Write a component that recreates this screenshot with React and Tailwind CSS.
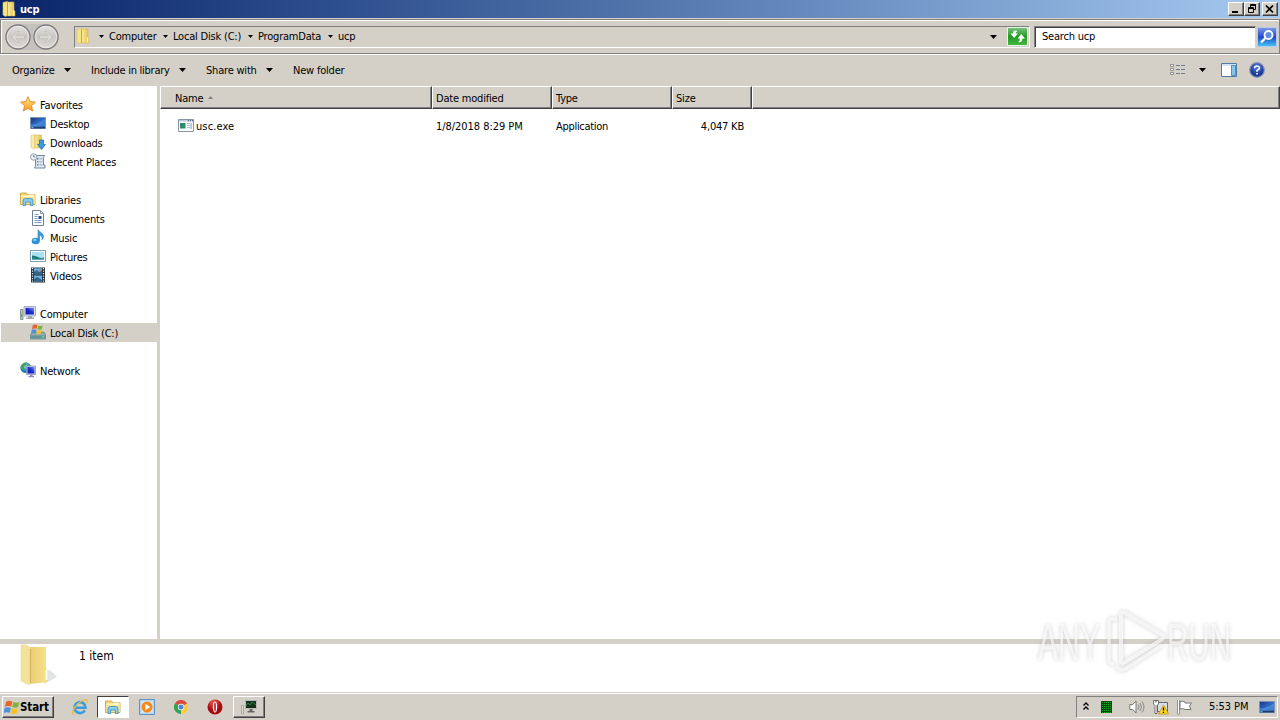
import React from 'react';

const Svg = ({ w = 16, h = 16, vb, className = '', children }) => (
  <svg width={w} height={h} viewBox={vb || `0 0 ${w} ${h}`} className={`block shrink-0 ${className}`}>
    {children}
  </svg>
);

const Gradients = () => (
  <svg width="0" height="0" className="absolute">
    <defs>
      <linearGradient id="fold" x1="0" x2="1">
        <stop offset="0" stopColor="#f9eba0" />
        <stop offset="1" stopColor="#e3bf4e" />
      </linearGradient>
      <linearGradient id="bigfold" x1="0" x2="1">
        <stop offset="0" stopColor="#e9cd74" />
        <stop offset="1" stopColor="#f6e28c" />
      </linearGradient>
      <linearGradient id="blue" x1="0" x2="1" y1="0" y2="1">
        <stop offset="0" stopColor="#16327c" />
        <stop offset="0.5" stopColor="#2f6cc8" />
        <stop offset="1" stopColor="#1b4796" />
      </linearGradient>
      <linearGradient id="screen" x1="0" x2="1" y1="1" y2="0">
        <stop offset="0" stopColor="#0b1aa0" />
        <stop offset="0.5" stopColor="#1a2ccc" />
        <stop offset="1" stopColor="#7d92ee" />
      </linearGradient>
      <linearGradient id="star" x1="0" x2="0" y1="0" y2="1">
        <stop offset="0" stopColor="#ffe98a" />
        <stop offset="1" stopColor="#fb9a1c" />
      </linearGradient>
      <linearGradient id="nav" x1="0" x2="0" y1="0" y2="1">
        <stop offset="0" stopColor="#e4e2df" />
        <stop offset="0.5" stopColor="#c9c7c3" />
        <stop offset="1" stopColor="#dedbd7" />
      </linearGradient>
      <linearGradient id="go" x1="0" x2="0" y1="0" y2="1">
        <stop offset="0" stopColor="#7cc47a" />
        <stop offset="0.5" stopColor="#219a24" />
        <stop offset="1" stopColor="#45b83f" />
      </linearGradient>
      <linearGradient id="find" x1="0" x2="0" y1="0" y2="1">
        <stop offset="0" stopColor="#7f9be8" />
        <stop offset="0.5" stopColor="#2049cc" />
        <stop offset="1" stopColor="#45c8f4" />
      </linearGradient>
      <radialGradient id="globe" cx="0.4" cy="0.3">
        <stop offset="0" stopColor="#9de0f2" />
        <stop offset="1" stopColor="#1580b4" />
      </radialGradient>
      <radialGradient id="help" cx="0.5" cy="0.3">
        <stop offset="0" stopColor="#5b80de" />
        <stop offset="1" stopColor="#1a3a9c" />
      </radialGradient>
      <radialGradient id="opera" cx="0.4" cy="0.2">
        <stop offset="0" stopColor="#f05a55" />
        <stop offset="1" stopColor="#a80a10" />
      </radialGradient>
    </defs>
  </svg>
);

const Folder = ({ className }) => (
  <Svg className={className}>
    <path d="M2 1.500 6.500.5v14l-2 1L2 14z" fill="#f8e580" stroke="#dcc05a" strokeWidth=".6" />
    <path d="M6.500 1h6.500v8l1 1.500v4.500H6.500z" fill="url(#fold)" stroke="#d2ae48" strokeWidth=".5" />
    <path d="M6.500 1.500v13.500" stroke="#c29a35" strokeWidth=".7" />
    <path d="M12.700 9.500v5" stroke="#fffbe0" strokeWidth="1.200" />
  </Svg>
);
const Star = () => (
  <Svg>
    <path d="m8 .7 2.200 4.900 5.200.5-3.900 3.600 1.100 5.300L8 12.300 3.400 15l1.100-5.300L.6 6.100l5.200-.5z" fill="url(#star)" stroke="#e38522" strokeWidth=".9" />
  </Svg>
);
const Desktop = () => (
  <Svg>
    <path d="M.5 2.500h15v11H.5z" fill="url(#blue)" stroke="#7c93b8" />
    <path d="M1 9.500Q7 10 15 4v7.500H1z" fill="#62a5ec" opacity=".5" />
    <path d="M1 12h14v1.500H1z" fill="#253c6c" />
    <path d="M1.500 12.200h2v1h-2z" fill="#7fd0ef" />
  </Svg>
);
const Downloads = () => (
  <Svg>
    <path d="M1 1.500 5 .5v13.500l-1.500 1L1 13.500z" fill="#faecab" stroke="#dac05c" strokeWidth=".6" />
    <path d="M5 1h6.500v13H5z" fill="url(#fold)" stroke="#d2b04c" strokeWidth=".5" />
    <path d="M9.500 6h4v4.500h2L11.500 15.500l-4-5h2z" fill="#3a9ae2" stroke="#1d67ae" strokeWidth=".7" />
  </Svg>
);
const Recent = () => (
  <Svg>
    <path d="M5 2.500h9.500q-1 1-1 3V12h1.500v3H4.500q1-1 1-3V5z" fill="#e0e9f2" stroke="#74879b" strokeWidth="1" />
    <path d="M7 5h1.500v1.500H7zM7 8h1.500v1.500H7zM7 11h1.500v1.500H7z" fill="#5d83ab" />
    <path d="M9.500 5.800h3M9.500 8.800h3M9.500 11.800h3" stroke="#8ea7bf" />
    <circle cx="3.700" cy="4" r="3.200" fill="#eef4f9" stroke="#7d8b98" strokeWidth=".8" />
    <path d="M3.700 2v2h1.500" stroke="#555" strokeWidth=".7" fill="none" />
  </Svg>
);
const Libraries = ({ w = 16 }) => (
  <Svg w={w} h={w} vb="0 0 16 16">
    <path d="M.5 2h6l1 1.500h7.500v10H.5z" fill="#f4d774" stroke="#c99d32" strokeWidth=".8" />
    <path d="M1.500 4.500h6l1-1h6V6h-13z" fill="#fff7c8" />
    <path d="M1 6h14v7H1z" fill="#f6e190" />
    <path d="M3 14.500V10q0-2.500 2.500-2.500h5Q13 7.500 13 10v4.500h-2.700V11H5.700v3.500z" fill="#87cdee" stroke="#3c8dbb" strokeWidth=".8" />
  </Svg>
);
const Documents = () => (
  <Svg>
    <path d="M2.500.5h8l3 3v12h-11z" fill="#fdfdff" stroke="#6e8097" />
    <path d="M10.500.5v3h3" fill="#d6dfeb" stroke="#6e8097" strokeWidth=".8" />
    <path d="M4.500 4.500h4M4.500 6.500h3M4.500 8.500h3M4.500 10.500h7M4.500 12.500h7" stroke="#7f9cc2" />
    <path d="M8.500 6h3v3h-3z" fill="#284d84" />
  </Svg>
);
const Music = () => (
  <Svg>
    <path d="M8 .5c.5 2.500 5.500 3 5.500 7 0 1.500-.8 2.500-1.500 3.200.6-2.500-.5-4-2.500-4.700V12H8z" fill="#3a9ddd" stroke="#2277b7" strokeWidth=".5" />
    <ellipse cx="5.700" cy="12" rx="4" ry="3.300" fill="#2c8fd6" />
    <ellipse cx="4.800" cy="10.900" rx="1.800" ry="1.100" fill="#8ed2f6" />
  </Svg>
);
const Pictures = () => (
  <Svg>
    <path d="M.5 2.500h15v11H.5z" fill="#fff" stroke="#7c9bab" />
    <path d="M2 4h12v8H2z" fill="#a8e1f0" />
    <path d="M2 7.500q3.500 0 6 1.500t6 .5V12H2z" fill="#1d7b78" />
    <path d="M2 10.500q6 1 12-.5V12H2z" fill="#5aa7b8" />
  </Svg>
);
const Videos = () => (
  <Svg>
    <path d="M1 .5h14v15H1z" fill="#25303a" />
    <path d="M4 1.200h8v6H4zM4 8.500h8v6H4z" fill="#68afdd" />
    <path d="m4 5 3-2 2 2 3-2v4.200H4zM4 12l3-2 5 3v1.500H4z" fill="#31658c" />
    <path d="M9 2.500h2v2H9z" fill="#d1845c" />
    <path d="M2.500 1v15M13.500 1v15" stroke="#e4edf2" strokeWidth="1.200" strokeDasharray="1.300 1.200" />
  </Svg>
);
const Computer = () => (
  <Svg>
    <path d="M.5 4.500h2.500v10H.5z" fill="#b9c6bd" stroke="#78877c" strokeWidth=".8" />
    <path d="M1 9h1.400v3H1z" fill="#62b24a" />
    <path d="M4 1.500h11.500v9.500H4z" fill="#dedff0" stroke="#9a9cc0" strokeWidth=".8" />
    <path d="M5.500 2.800h8.500V9.500H5.500z" fill="url(#screen)" />
    <path d="M8 11h4v1.500h2v1.500H6v-1.500h2z" fill="#a3a7b5" />
  </Svg>
);
const Flag = () => (
  <g>
    <path d="M2 1.500Q4.500 0 7 1.500L6 5.500Q3.500 4.500 1 5.700z" fill="#ec642a" />
    <path d="M7.800 1.800Q10 3 12.500 1.800l-1 4Q9 7 6.800 5.800z" fill="#7db53e" />
    <path d="M.8 6.500Q3.200 5.300 5.800 6.500L4.800 10.300Q2.500 9.300 0 10.500z" fill="#4c91dc" />
    <path d="M6.600 6.700Q9 8 11.300 6.700l-1 4Q8 12 5.600 10.700z" fill="#f6c11f" />
  </g>
);
const Disk = () => (
  <Svg>
    <path d="M1 10 3 8h11l1.500 2.500v4.500H.5v-4z" fill="#93aaae" stroke="#5c7478" strokeWidth=".6" />
    <path d="M1 11.500h14v3H1z" fill="#5d959b" />
    <path d="M12 12.500h2v1h-2z" fill="#a7f07c" />
    <g transform="translate(1 -.3) scale(.94)"><Flag /></g>
  </Svg>
);
const Network = () => (
  <Svg>
    <circle cx="5.700" cy="5.700" r="5.400" fill="url(#globe)" />
    <path d="M2 3q2-3 5-2.500L6 3 3.500 5 4 7 2.500 8Q.5 5 2 3zM7 4l3-1 1 2H8z" fill="#46a047" />
    <path d="M6.500 4h9v8.500h-9z" fill="#cfd5ea" stroke="#8088b2" strokeWidth=".7" />
    <path d="M7.500 5h7v6.500h-7z" fill="url(#screen)" />
    <path d="M10 12.500h2.500V14H14v1.200H8.500V14H10z" fill="#8a90b5" />
  </Svg>
);
const Exe = () => (
  <Svg>
    <path d="M.5 1.500h15v12H.5z" fill="#fff" stroke="#8694a8" />
    <path d="M1 2h14v1.500H1z" fill="#bccbdd" />
    <path d="M10 2.200h1v1h-1zM12 2.200h1v1h-1zM14 2.200h1v1h-1z" fill="#42587a" />
    <path d="M2 5h5.500v5.500H2z" fill="#2f8a68" />
    <path d="M9 5.500h3M9 7.500h3M9 9.500h3" stroke="#b9c2cc" />
    <path d="M13 5v6" stroke="#6aa4c5" />
  </Svg>
);
const NavCircle = ({ flip }) => (
  <Svg w={26} h={26}>
    <circle cx="13" cy="13" r="12" fill="url(#nav)" stroke="#7b7b7d" strokeWidth="1.300" />
    <circle cx="13" cy="13" r="10.700" fill="none" stroke="#efeeec" strokeWidth=".8" />
    <g transform={flip ? 'translate(26 0) scale(-1 1)' : ''}>
      <path d="m6.500 13 5.500-5.500h2.500L11 11.300h8.500v3.400H11l3.500 3.800H12z" fill="#dad8d4" stroke="#c0bdb8" strokeWidth=".8" />
    </g>
  </Svg>
);
const Caret = ({ small, className = '' }) =>
  small ? (
    <Svg w={5} h={3} className={className}><path d="M0 0h5L2.500 3z" fill="#000" /></Svg>
  ) : (
    <Svg w={7} h={4} className={className}><path d="M0 0h7L3.500 4z" fill="#000" /></Svg>
  );

const IE = () => (
  <Svg w={18} h={18}>
    <path d="M13.800 12.300A5.500 5.500 0 1 1 14.500 9.700H5" fill="none" stroke="#3a9ce0" strokeWidth="2.600" />
    <path d="M3 16.300C-1.500 16 5.500 4.500 13 2c3.500-1 3.500 1 2.500 3.200" fill="none" stroke="#e9bd38" strokeWidth="1.300" />
  </Svg>
);
const Player = () => (
  <Svg>
    <path d="M.5.500h15v15H.5z" fill="#b8d6f0" stroke="#5e93c5" />
    <path d="M2.500 2.500h11v11h-11z" fill="#dceaf5" />
    <circle cx="8" cy="8" r="5.500" fill="#f58a1c" />
    <path d="m6.300 4.800 5 3.200-5 3.200z" fill="#fff" />
  </Svg>
);
const Chrome = () => (
  <Svg w={14} h={14}>
    <path d="M7 7 .9 3.500A7 7 0 0 1 13.100 3.500z" fill="#dd4b3e" />
    <path d="M7 7v7A7 7 0 0 1 .9 3.500z" fill="#35a155" />
    <path d="M7 7l6.100-3.500A7 7 0 0 1 7 14z" fill="#fbcb38" />
    <circle cx="7" cy="7" r="3.200" fill="#fff" />
    <circle cx="7" cy="7" r="2.500" fill="#4a86e0" />
  </Svg>
);
const Opera = () => (
  <Svg>
    <circle cx="8" cy="8" r="7.500" fill="url(#opera)" />
    <ellipse cx="8" cy="8" rx="2.200" ry="5.500" fill="#fff" />
    <ellipse cx="8" cy="8" rx=".9" ry="4.700" fill="#b52a2c" />
  </Svg>
);
const Console = () => (
  <Svg>
    <path d="M.5 6.500h2v8h-2z" fill="#e2e2dc" stroke="#999" strokeWidth=".8" />
    <path d="M4.500 1.500h11v8h-11z" fill="#12301a" stroke="#b9b9b9" />
    <path d="m5 7 2-3 2 2 2-3 4 3" stroke="#3f9854" fill="none" strokeWidth=".8" />
    <path d="M8.500 10h3v2h2v1.500h-7V12h2z" fill="#666" />
  </Svg>
);
const WindowsLogo = () => (
  <Svg w={17} h={16} vb="-.5 -.5 13.500 12.500"><Flag /></Svg>
);

const raised = 'border border-t-white border-l-white border-r-[#404040] border-b-[#404040] shadow-[inset_-1px_-1px_0_#808080]';

const Crumb = ({ children, className }) => (
  <div className={`flex items-center ${className}`}>
    <Caret small />
    <span className="ml-[5px]">{children}</span>
  </div>
);

const NavItem = ({ icon, children, root, selected }) => (
  <div className={`flex h-[19px] items-center gap-1 ${root ? 'pl-[19px]' : 'pl-[29px]'} ${selected ? 'bg-[#d4d0c8]' : ''}`}>
    <span className="-mt-px">{icon}</span>
    <span className="mt-[3px]">{children}</span>
  </div>
);

const HeadCell = ({ children, className }) => (
  <div className={`flex h-[23px] items-center border-t border-l border-t-white border-l-white border-r border-r-[#404040] border-b border-b-[#404040] bg-[#d4d0c8] pt-[2px] shadow-[inset_-1px_-1px_0_#808080] ${className}`}>
    {children}
  </div>
);

export default function App() {
  return (
    <div className="flex h-[720px] w-[1280px] flex-col overflow-hidden bg-[#d4d0c8] font-['DejaVu_Sans_Condensed','DejaVu_Sans',sans-serif] text-[11px] leading-[14px] tracking-[-0.2px] whitespace-nowrap text-black [font-stretch:condensed]">
      <Gradients />
      <header className="flex h-[18px] shrink-0 items-center bg-linear-to-r from-[#0a246a] to-[#a6caf0] pr-[2px] pl-[1px]">
        <Folder />
        <span className="ml-[3px] pt-px font-bold text-white">ucp</span>
        <div className="ml-auto flex">
          <div className={`flex h-[14px] w-4 items-end bg-[#d4d0c8] pb-[2px] pl-[3px] ${raised}`}>
            <div className="h-[2px] w-[6px] bg-black" />
          </div>
          <div className={`h-[14px] w-4 bg-[#d4d0c8] ${raised}`}>
            <Svg w={14} h={12}><path d="M5.500 1.500h5v5h-2M5.500 2.500h5M5.500 4V1.500M3.500 4.500h5v5h-5zM3.500 5.500h5" stroke="#000" fill="none" /></Svg>
          </div>
          <div className={`ml-[2px] h-[14px] w-4 bg-[#d4d0c8] ${raised}`}>
            <Svg w={14} h={12}><path d="m3 2.500 7 7m0-7-7 7" stroke="#000" strokeWidth="1.700" /></Svg>
          </div>
        </div>
      </header>

      <div className="mt-px flex h-[35px] shrink-0 items-center border border-[#808080] pl-1 shadow-[inset_1px_1px_0_#fff,0_1px_0_#fff]">
        <div className="mr-[15px] flex gap-[2px] rounded-full bg-[#c5c2bd]">
          <NavCircle />
          <NavCircle flip />
        </div>
        <div className="flex h-[22px] w-[956px] items-center border border-t-[#808080] border-r-white border-b-white border-l-[#808080]">
          <Folder className="-mt-px" />
          <Crumb className="ml-[8px] w-[64px]">Computer</Crumb>
          <Crumb className="w-[85px]">Local Disk (C:)</Crumb>
          <Crumb className="w-[80px]">ProgramData</Crumb>
          <Crumb>ucp</Crumb>
          <Caret className="mr-[10px] ml-auto" />
          <Svg w={22} h={20}>
            <path d="M.5.500h20v18H.5z" fill="url(#go)" stroke="#e9f4e5" />
            <path d="M10.500 4Q6 2.500 6 6.500H3.500l3.700 4.500 3.700-4.500H8.700Q8.500 5 10.500 4z" fill="#fff" />
            <path d="M11 15q4.500 1 4.500-3.500H18L14.300 7l-3.700 4.500h2.200q.2 2.500-1.800 3.500z" fill="#fff" />
          </Svg>
        </div>
        <div className="ml-[4px] flex h-[22px] w-[222px] items-center border border-t-[#808080] border-r-[#d4d0c8] border-b-white border-l-[#808080] bg-white pt-px pl-[7px] shadow-[inset_1px_1px_0_#404040]">Search ucp</div>
        <Svg w={20} h={20} className="ml-px">
          <path d="M.5.500h19v19H.5z" fill="url(#find)" stroke="#b8c9ee" />
          <circle cx="11.500" cy="8" r="4" fill="#5e8ce6" stroke="#fff" strokeWidth="1.800" />
          <path d="m8.500 11-4.500 4.500" stroke="#fff" strokeWidth="2.400" />
        </Svg>
      </div>

      <div className="flex h-8 shrink-0 items-center pl-3">
        <span className="w-[52px] pt-px">Organize</span><Caret />
        <span className="ml-[20px] w-[88px] pt-px tracking-[-0.25px]">Include in library</span><Caret />
        <span className="ml-[20px] w-[60px] pt-px">Share with</span><Caret />
        <span className="ml-[20px] pt-px">New folder</span>
        <Svg w={16} h={14} className="ml-auto">
          <path d="M.5 1.500h3v2h-3zM.5 5.500h3v2h-3zM.5 9.500h3v2h-3z" fill="#fff" stroke="#777" strokeWidth=".8" />
          <path d="M6 2.500h4M11 2.500h4M6 6.500h4M11 6.500h4M6 10.500h4M11 10.500h4" stroke="#6d7f93" />
        </Svg>
        <Caret className="ml-[13px]" />
        <Svg w={16} h={14} className="ml-[15px]">
          <path d="M.5.500h15v13H.5z" fill="#fff" stroke="#4f7ba8" />
          <path d="M1 1h14v2H1z" fill="#d3e5f4" />
          <path d="M10.500 2.500h4v10h-4z" fill="#88c6e6" stroke="#4f8fb8" />
        </Svg>
        <Svg w={16} h={16} className="mr-[15px] ml-3">
          <circle cx="8" cy="8" r="7.300" fill="url(#help)" stroke="#8793b2" strokeWidth="1.200" />
          <path d="M5.500 6.200Q5.700 4 8 4t2.500 2Q10.500 7.200 8 8.400v1.300" fill="none" stroke="#fff" strokeWidth="1.600" />
          <path d="M7.200 10.900h1.700v1.600H7.200z" fill="#fff" />
        </Svg>
      </div>

      <div className="flex h-[553px] shrink-0">
        <nav className="w-[160px] border-r-[3px] border-r-[#d4d0c8] bg-white pt-[9px] pl-px">
          <NavItem root icon={<Star />}>Favorites</NavItem>
          <NavItem icon={<Desktop />}>Desktop</NavItem>
          <NavItem icon={<Downloads />}>Downloads</NavItem>
          <NavItem icon={<Recent />}>Recent Places</NavItem>
          <div className="h-[19px]" />
          <NavItem root icon={<Libraries />}>Libraries</NavItem>
          <NavItem icon={<Documents />}>Documents</NavItem>
          <NavItem icon={<Music />}>Music</NavItem>
          <NavItem icon={<Pictures />}>Pictures</NavItem>
          <NavItem icon={<Videos />}>Videos</NavItem>
          <div className="h-[19px]" />
          <NavItem root icon={<Computer />}>Computer</NavItem>
          <NavItem selected icon={<Disk />}>Local Disk (C:)</NavItem>
          <div className="h-[19px]" />
          <NavItem root icon={<Network />}>Network</NavItem>
        </nav>
        <main className="flex-1 bg-white">
          <div className="flex">
            <HeadCell className="w-[272px] pl-[14px]">
              Name
              <Svg w={5} h={3} className="mb-[3px] ml-[5px]"><path d="M2.500 0 5 3H0z" fill="#858585" /></Svg>
            </HeadCell>
            <HeadCell className="w-[120px] pl-[3px]">Date modified</HeadCell>
            <HeadCell className="w-[120px] pl-[3px]">Type</HeadCell>
            <HeadCell className="w-[80px] pl-[3px]">Size</HeadCell>
            <HeadCell className="flex-1" />
          </div>
          <div className="mt-[8px] flex h-[18px] items-center pl-[18px]">
            <Exe />
            <span className="ml-[2px] w-[240px] pt-px tracking-[0.1px]">usc.exe</span>
            <span className="w-[120px] pt-px tracking-[-0.05px]">1/8/2018 8:29 PM</span>
            <span className="w-[108px] pt-px tracking-[-0.3px]">Application</span>
            <span className="w-[80px] pt-px text-right">4,047 KB</span>
          </div>
        </main>
      </div>

      <div className="h-[5px] shrink-0 bg-[#d4d0c8]" />
      <div className="relative flex h-[48px] shrink-0 bg-white pl-[20px]">
        <Svg w={40} h={44}>
          <path d="m24 40 13-7-7-7-5 1z" fill="#a9b2b4" opacity=".35" />
          <path d="M9 3h17v21l2 3v11l-18 2z" fill="url(#bigfold)" />
          <path d="M1 1h5l5 3v35l-2 2-8-4z" fill="#f4e29a" stroke="#ecd995" strokeWidth=".6" />
          <path d="M10.500 5v34" stroke="#d0b15c" strokeWidth="1.200" />
          <path d="M26.500 26v10" stroke="#fffdf0" strokeWidth="2" />
        </Svg>
        <span className="mt-[5px] ml-[19px] text-[12px] leading-[14px] tracking-normal">1 item</span>
        <div className="absolute top-[-39px] left-[1032px]">
          <svg width="210" height="78" viewBox="0 0 210 78" className="block drop-shadow-[0_0_2px_#88888899]">
            <g fill="none" stroke="#fff" strokeOpacity=".65" strokeLinejoin="round">
              <path d="M85 14h-5q-3 0-3 4v37q0 4 5 4" strokeWidth="3.500" />
              <path d="M89 11q0-5 4-3l36 21q5 3 0 6L93 57q-4 2-4-2z" strokeWidth="4" />
              <path d="M84 61q5 7 11 2l35-23" strokeWidth="3.500" />
            </g>
            <g fill="#fff" fillOpacity=".65" fontFamily="'Liberation Sans Narrow','Liberation Sans',sans-serif" fontSize="51" letterSpacing="0">
              <text x="6" y="55" textLength="62" lengthAdjust="spacingAndGlyphs">ANY</text>
              <text x="135" y="55" textLength="64" lengthAdjust="spacingAndGlyphs">RUN</text>
            </g>
          </svg>
        </div>
      </div>

      <footer className="flex h-7 shrink-0 items-center border-t border-t-[#d4d0c8] pr-[2px] pl-[2px] shadow-[inset_0_1px_0_#fff]">
        <div className={`flex h-[22px] w-[52px] items-center pl-0 text-[11.5px] font-bold ${raised}`}>
          <WindowsLogo /><span className="pt-px tracking-[-0.1px]">Start</span>
        </div>
        <div className="ml-[17px]"><IE /></div>
        <div className="ml-[8px] flex h-[22px] w-8 items-center justify-center border border-t-[#404040] border-r-white border-b-white border-l-[#404040] bg-white">
          <Libraries />
        </div>
        <div className="ml-[10px]"><Player /></div>
        <div className="ml-[19px]"><Chrome /></div>
        <div className="ml-[19px]"><Opera /></div>
        <div className={`ml-[10px] flex h-[22px] w-8 items-center justify-center ${raised}`}><Console /></div>
        <div className="ml-auto flex h-[22px] w-[202px] items-center border border-t-[#808080] border-r-white border-b-white border-l-[#808080] pl-[6px]">
          <Svg w={6} h={9}><path d="m.5 3.500 2.500-2.500 2.500 2.500M.5 7.500 3 5l2.500 2.500" stroke="#000" strokeWidth="1.300" fill="none" /></Svg>
          <Svg w={11} h={12} className="ml-[12px]">
            <path d="M0 0h11v12H0z" fill="#064a0c" />
            <path d="M1.500 1v11M3.500 1v11M5.500 1v11M7.500 1v11M9.500 1v11" stroke="#16a526" strokeDasharray="1 1" />
          </Svg>
          <Svg w={16} h={16} className="ml-[17px]">
            <path d="M.8 5.500h3L7 2v12L3.800 10.500h-3z" fill="#fff" stroke="#777" />
            <path d="M9 5.500q2 2.500 0 5M11 4q3 4 0 8M13 2.500q4 5.500 0 11" stroke="#888" fill="none" />
          </Svg>
          <Svg w={16} h={16} className="ml-[8px]">
            <path d="M4.500 3.500h10v9h-10z" fill="#d8dde5" stroke="#666" />
            <path d="M.5 1.500h5V5L4 6.500v8H2v-8L.5 5z" fill="#fff" stroke="#555" strokeWidth=".8" />
            <path d="M2.500 1.500h1v2h-1z" fill="#555" />
            <path d="m10.500 6 5 9h-10z" fill="#ffd92b" stroke="#c69400" strokeWidth=".8" />
            <path d="M10.500 8.500v3M10.500 12.700v1.300" stroke="#000" strokeWidth="1.300" />
          </Svg>
          <Svg w={16} h={16} className="ml-[8px]">
            <path d="M1.500 1v14.500" stroke="#777" strokeWidth="2.400" />
            <path d="M1.500 1v14" stroke="#fff" />
            <path d="M3 2.500q3-1 5 .5V4h6.500l-2 3 1.500 3.500H8Q6 9 3 10z" fill="#fff" stroke="#777" />
          </Svg>
          <span className="ml-[16px] w-[50px] pt-px tracking-[-0.05px]">5:53 PM</span>
          <Desktop />
        </div>
      </footer>
    </div>
  );
}
